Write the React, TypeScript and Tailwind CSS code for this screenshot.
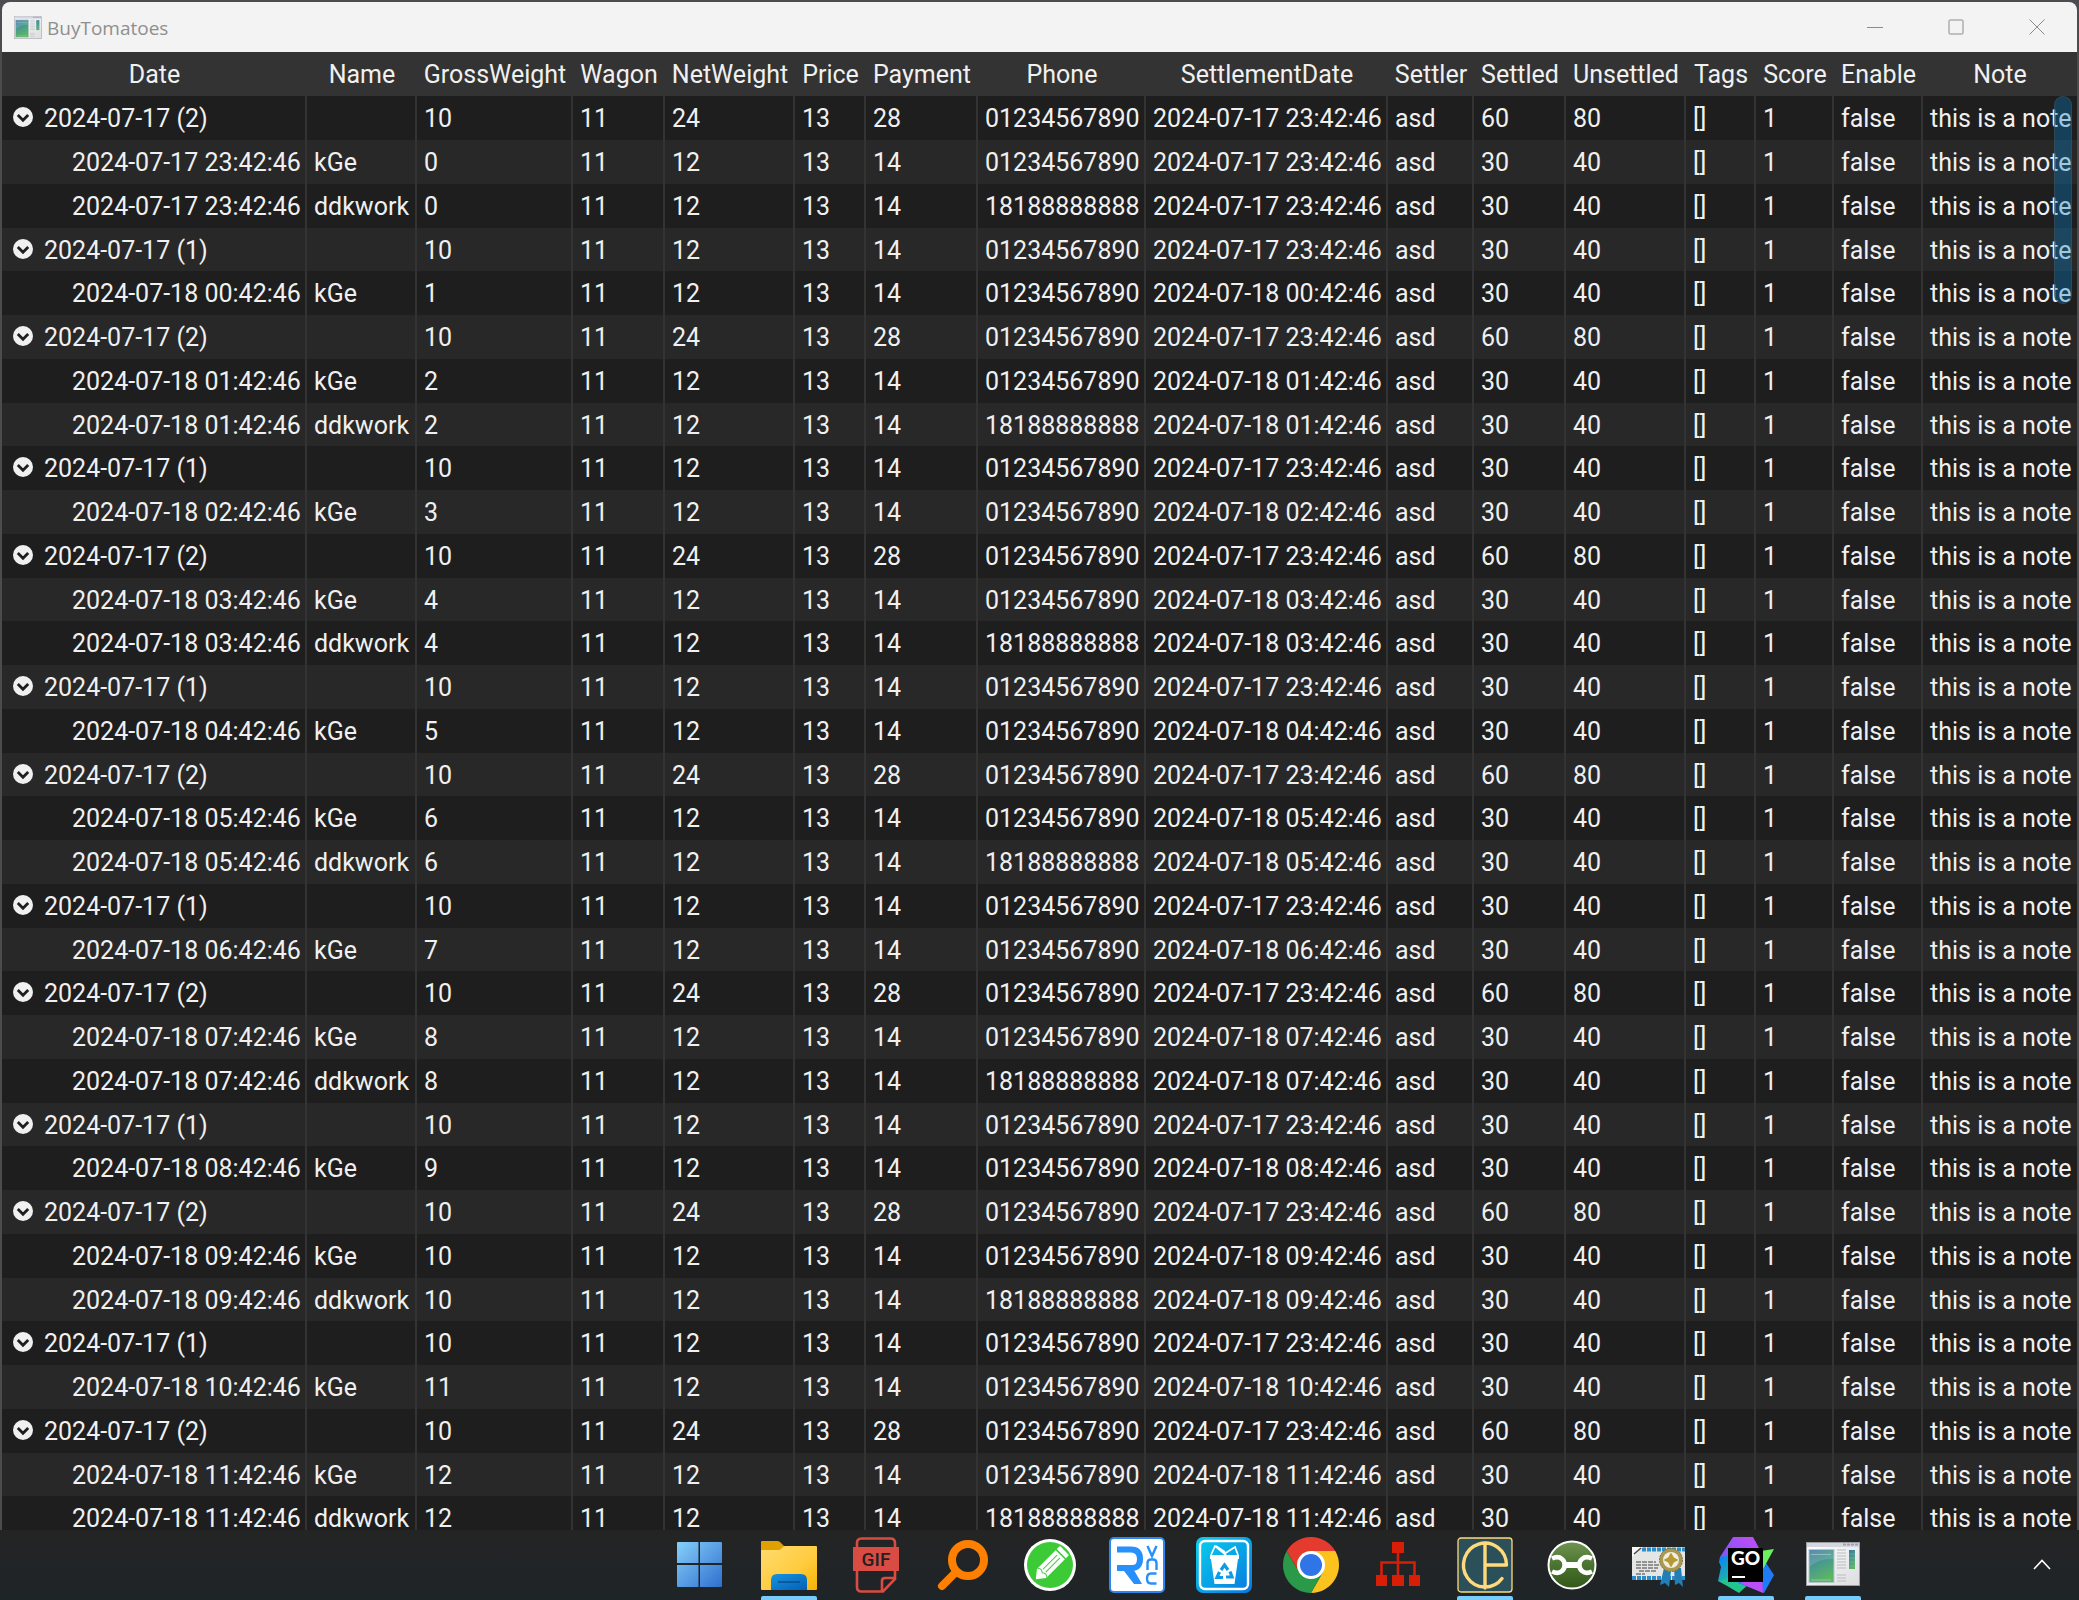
import React from "react";

type Column = { label: string; width: string };

const columns: Column[] = [
  { label: "Date", width: "w-[305px]" },
  { label: "Name", width: "w-[110px]" },
  { label: "GrossWeight", width: "w-[156px]" },
  { label: "Wagon", width: "w-[92px]" },
  { label: "NetWeight", width: "w-[130px]" },
  { label: "Price", width: "w-[71px]" },
  { label: "Payment", width: "w-[112px]" },
  { label: "Phone", width: "w-[168px]" },
  { label: "SettlementDate", width: "w-[242px]" },
  { label: "Settler", width: "w-[86px]" },
  { label: "Settled", width: "w-[92px]" },
  { label: "Unsettled", width: "w-[120px]" },
  { label: "Tags", width: "w-[70px]" },
  { label: "Score", width: "w-[78px]" },
  { label: "Enable", width: "w-[89px]" },
  { label: "Note", width: "w-auto" },
];

type Row = { group: boolean; cells: string[] };

const FIRST = "2024-07-17 23:42:46";

function buildRows(): Row[] {
  const rows: Row[] = [];
  for (let i = 0; i < 13; i++) {
    const pair = i % 2 === 0;
    const stamp = i === 0 ? FIRST : `2024-07-18 ${String(i - 1).padStart(2, "0")}:42:46`;
    const tail = ["[]", "1", "false", "this is a note"];
    rows.push({
      group: true,
      cells: [
        `2024-07-17 (${pair ? 2 : 1})`, "", "10", "11", pair ? "24" : "12", "13", pair ? "28" : "14",
        "01234567890", FIRST, "asd", pair ? "60" : "30", pair ? "80" : "40", ...tail,
      ],
    });
    const names = pair ? ["kGe", "ddkwork"] : ["kGe"];
    names.forEach((name) => {
      const phone = name === "kGe" ? "01234567890" : "18188888888";
      rows.push({
        group: false,
        cells: [stamp, name, String(i), "11", "12", "13", "14", phone, stamp, "asd", "30", "40", ...tail],
      });
    });
  }
  return rows;
}

const rows = buildRows();

function AppIcon({ className }: { className: string }) {
  return (
    <svg viewBox="0 0 54 44" preserveAspectRatio="none" className={className} aria-hidden="true">
      <defs>
        <linearGradient id="pane" x1="0" y1="0" x2="0.4" y2="1">
          <stop offset="0" stopColor="#3f74a6" />
          <stop offset="0.5" stopColor="#47998f" />
          <stop offset="1" stopColor="#5cb563" />
        </linearGradient>
        <linearGradient id="frame" x1="0" y1="0" x2="1" y2="1">
          <stop offset="0" stopColor="#ffffff" />
          <stop offset="1" stopColor="#dcdddf" />
        </linearGradient>
      </defs>
      <rect x="0.5" y="0.5" width="53" height="43" fill="url(#frame)" stroke="#9a9da1" />
      <rect x="1" y="1" width="52" height="4" fill="#d4d6e2" />
      <path d="M37 2.5h15" stroke="#9fa2ad" strokeWidth="2" strokeDasharray="3 1" />
      <rect x="3" y="7.5" width="25" height="33" fill="url(#pane)" stroke="#b5c7c9" />
      <path d="M3.5 25Q13 16 27.5 17V8H3.5Z" fill="#fff" opacity="0.14" />
      <path d="M5 12.5h20M5 38h20" stroke="#a8d0c0" strokeWidth="0.7" />
      <path d="M31 8h9M31 11h9M31 14h9M31 17h9M31 20h9M31 23h9M31 26h9M31 33h9M31 36h9M31 39h9" stroke="#b9bbbd" />
      <rect x="43" y="8" width="6" height="19" fill="url(#pane)" />
      <path d="M43 12h6M43 16h6M43 20h6M43 24h6" stroke="#7fb0b4" strokeWidth="0.6" />
    </svg>
  );
}

function ExpandIcon() {
  return (
    <svg viewBox="0 0 20 20" className="size-5" aria-hidden="true">
      <circle cx="10" cy="10" r="10" fill="#f0f0f0" />
      <path d="M4.8 8L10 13.2L15.2 8" fill="none" stroke="#1e1e1e" strokeWidth="2.8" />
    </svg>
  );
}

function TitleBar() {
  return (
    <header className="flex h-[50px] shrink-0 items-center rounded-t-lg bg-[#f3f3f3] pl-3">
      <AppIcon className="h-[23px] w-7" />
      <h1 className="ml-[5px] flex-1 pt-0.5 font-['Open_Sans',sans-serif] text-[19px] text-[#8f8f8f]">BuyTomatoes</h1>
      <div className="flex h-full text-[#8b8b8b]">
        <button aria-label="Minimize" className="grid w-[81px] place-items-center">
          <svg viewBox="0 0 16 16" className="size-4"><path d="M0 8.5h16" stroke="currentColor" /></svg>
        </button>
        <button aria-label="Maximize" className="grid w-[81px] place-items-center">
          <svg viewBox="0 0 16 16" className="size-4"><rect x="1" y="1" width="14" height="14" rx="1" fill="none" stroke="currentColor" /></svg>
        </button>
        <button aria-label="Close" className="grid w-[81px] place-items-center">
          <svg viewBox="0 0 16 16" className="size-4"><path d="M0.5 0.5l15 15M15.5 0.5l-15 15" stroke="currentColor" /></svg>
        </button>
      </div>
    </header>
  );
}

function RecordsTable() {
  return (
    <table className="w-full table-fixed border-separate border-spacing-0 text-[25px] leading-7 text-[#f0f0f0]">
      <colgroup>
        {columns.map((c) => <col key={c.label} className={c.width} />)}
      </colgroup>
      <thead>
        <tr className="h-11 bg-[#333333]">
          {columns.map((c) => (
            <th key={c.label} scope="col" className="p-0 pt-0.5 text-center font-normal whitespace-nowrap">{c.label}</th>
          ))}
        </tr>
      </thead>
      <tbody>
        {rows.map((row, r) => (
          <tr key={r} className="h-11 odd:bg-[#1e1e1e] even:bg-[#282828] nth-[4n]:h-[43px]">
            {row.cells.map((cell, c) => (
              <td key={c} className="border-r-2 border-[#333333] p-0 pt-0.5 pl-[7px] whitespace-nowrap last:border-r-0">
                {c > 0 ? cell : row.group ? (
                  <div className="flex items-center gap-[11px] pl-1">
                    <button aria-label="Collapse group" className="mb-1"><ExpandIcon /></button>
                    {cell}
                  </div>
                ) : (
                  <div className="pl-[63px]">{cell}</div>
                )}
              </td>
            ))}
          </tr>
        ))}
      </tbody>
    </table>
  );
}

function StartIcon() {
  return (
    <svg viewBox="2 0 56 56" className="size-14">
      <defs>
        <linearGradient id="win" gradientUnits="userSpaceOnUse" x1="5" y1="5" x2="50" y2="50">
          <stop offset="0" stopColor="#86d0fa" />
          <stop offset="1" stopColor="#2f6fcd" />
        </linearGradient>
      </defs>
      <path d="M6 5h20.500v21H5V6q0-1 1-1M28 5h21q1 0 1 1v20H28ZM5 28h21.500v22H6q-1 0-1-1ZM28 28h22v21q0 1-1 1H28Z" fill="url(#win)" />
    </svg>
  );
}

function FolderIcon() {
  return (
    <svg viewBox="0 0 56 56" className="size-14">
      <defs>
        <linearGradient id="fold" x1="0" y1="0" x2="1" y2="1">
          <stop offset="0" stopColor="#ffdc70" />
          <stop offset="0.6" stopColor="#ffcb3d" />
          <stop offset="1" stopColor="#f5b301" />
        </linearGradient>
        <linearGradient id="pocket" x1="0" y1="0" x2="1" y2="1">
          <stop offset="0" stopColor="#1693e0" />
          <stop offset="1" stopColor="#0560b4" />
        </linearGradient>
      </defs>
      <path d="M0 15V5q0-1 1-1h15q2 0 3 1l5 5-4 5Z" fill="#e0a000" />
      <path d="M0 14q0-1 1-1h16q2 0 3-1l2-2q1-1 2-1h31q1 0 1 1v42q0 1-1 1H1q-1 0-1-1Z" fill="url(#fold)" />
      <path d="M10 53V43q0-6 6-6h24q6 0 6 6v10Z" fill="url(#pocket)" />
      <path d="M17 45h22" stroke="#0a4a8c" strokeWidth="1.4" />
    </svg>
  );
}

function GifIcon() {
  return (
    <svg viewBox="-3 0 56 56" className="size-14">
      <g fill="none" stroke="#d94c43" strokeWidth="2.6">
        <path d="M6 12V6q0-4.500 4.500-4.500h29q4.500 0 4.500 4.500v6M6 32v18q0 4.500 4.500 4.500H32L44 42V32" />
        <path d="M31 54V44q0-3 3-3h10" />
      </g>
      <rect x="2" y="10" width="46" height="24" fill="#d94c43" />
      <text x="25" y="28.5" textAnchor="middle" fontFamily="Roboto, sans-serif" fontSize="19" fontWeight="500" fill="#24201f">GIF</text>
    </svg>
  );
}

function SearchIcon() {
  return (
    <svg viewBox="1 0 56 56" className="size-14">
      <g fill="none" stroke="#ff8000">
        <circle cx="34" cy="23" r="16" strokeWidth="8" />
        <path d="M22 35L8 49" strokeWidth="8" strokeLinecap="round" />
      </g>
    </svg>
  );
}

function PencilIcon() {
  return (
    <svg viewBox="0 0 56 56" className="size-14">
      <circle cx="28" cy="28" r="26" fill="#fff" />
      <circle cx="28" cy="28" r="23" fill="#3ccb37" />
      <g transform="rotate(45 28 28)">
        <path d="M21.5 8.5q0-1 1-1h11q1 0 1 1V12h-13Z" fill="#fff" />
        <path d="M21.5 13.5h13V40L28 48l-6.500-8Z" fill="#fff" />
        <path d="M26 16v20M30 16v20M21.5 39q3.200-3 6.500 0q3.200-3 6.500 0" fill="none" stroke="#3ccb37" strokeWidth="1" />
      </g>
    </svg>
  );
}

function RemoteIcon() {
  return (
    <svg viewBox="0 0 56 56" className="size-14">
      <rect x="1" y="1" width="54" height="54" rx="4" fill="#fff" stroke="#2d87f3" strokeWidth="2" />
      <g fill="none" stroke="#2790fb">
        <path d="M8 12.500h14q9 0 9 9.500t-9 9H8" strokeWidth="6" />
        <path d="M8 28h14l11 19h-8L15 34H8Z" fill="#2790fb" stroke="none" />
        <path d="M38.500 9l4.500 10 4.500-10M38.500 33v-7q0-3.500 3.500-3.500h2q3.500 0 3.500 3.500v7M47.500 36.500H42q-4 0-4 5t4 5h5.500" strokeWidth="2.400" />
      </g>
    </svg>
  );
}

function TrashIcon() {
  return (
    <svg viewBox="0 0 56 56" className="size-14">
      <defs>
        <linearGradient id="bin" x1="0" y1="0" x2="1" y2="1">
          <stop offset="0" stopColor="#0ad0ee" />
          <stop offset="1" stopColor="#0778df" />
        </linearGradient>
      </defs>
      <rect width="56" height="56" rx="7" fill="url(#bin)" />
      <rect x="4" y="4" width="48" height="48" rx="5" fill="none" stroke="#fff" strokeWidth="2.4" />
      <path d="M14 18h29v4H14ZM15 22h27l-3.500 25h-20Z" fill="#fff" />
      <path d="M15 18l4-9 11 9M28 17l11-7 3 8M20 9l9 6" fill="none" stroke="#fff" strokeWidth="1.7" />
      <g fill="none" stroke="#0b9be8" strokeWidth="3.2">
        <path d="M25 33l3.500-5 3.500 5" />
        <path d="M34 34.500l2 5.500h-6" />
        <path d="M27 40.500h-6l2.500-5.500" />
      </g>
    </svg>
  );
}

function ChromeIcon() {
  return (
    <svg viewBox="0 0 56 56" className="size-14">
      <path d="M28 28L3.750 14A28 28 0 0 1 52.250 14Z" fill="#e53a2e" />
      <path d="M28 14H52.250A28 28 0 0 1 28 56L40 35Z" fill="#fcc31e" />
      <path d="M3.750 14A28 28 0 0 0 28 56L40 35 28 28 16 35Z" fill="#2a9a48" />
      <path d="M3.750 14L16 35 28 14Z" fill="#e53a2e" />
      <circle cx="28" cy="28" r="14" fill="#fff" />
      <circle cx="28" cy="28" r="11" fill="#2f75e8" />
    </svg>
  );
}

function TreeIcon() {
  return (
    <svg viewBox="0 0 56 56" className="size-14">
      <path d="M22 5h12v11H22ZM6 38h11v11H6ZM22 38h12v11H22ZM39 38h11v11H39Z" fill="#d81e06" />
      <path d="M28 16v22M11.5 38V25.500h33V38" fill="none" stroke="#d81e06" strokeWidth="2.6" />
    </svg>
  );
}

function EmblemIcon() {
  return (
    <svg viewBox="0 0 56 56" className="size-14">
      <rect x="1" y="1" width="54" height="54" rx="3" fill="#2c505a" stroke="#ffd97a" strokeWidth="1.3" />
      <path d="M28 6V51M28 28H49.500A21.500 22 0 1 0 45 41.500" fill="none" stroke="#ffd97a" strokeWidth="3.4" strokeLinecap="round" strokeLinejoin="round" />
    </svg>
  );
}

function WrenchIcon() {
  return (
    <svg viewBox="0 0 56 56" className="size-14">
      <defs>
        <linearGradient id="wr" x1="0" y1="0" x2="0" y2="1">
          <stop offset="0" stopColor="#6f9450" />
          <stop offset="0.5" stopColor="#4a7430" />
          <stop offset="1" stopColor="#34571a" />
        </linearGradient>
      </defs>
      <circle cx="28" cy="28" r="23.5" fill="url(#wr)" stroke="#fff" strokeWidth="2" />
      <g fill="none" stroke="#fff" strokeWidth="4.6">
        <path d="M8 21.500Q14 18.500 18 22Q21 24.500 20.500 28Q21 31.500 18 34Q14 37.500 8 34.500" />
        <path d="M48 21.500Q42 18.500 38 22Q35 24.500 35.500 28Q35 31.500 38 34Q42 37.500 48 34.500" />
        <path d="M21 28h14" strokeWidth="6" />
      </g>
    </svg>
  );
}

function CertificateIcon() {
  return (
    <svg viewBox="0 0 56 56" className="size-14">
      <rect x="1" y="10" width="53" height="33" fill="#e4e5e5" />
      <path d="M11 12.500h43M1 41h53" stroke="#2b8cc9" strokeWidth="4" strokeDasharray="4 1" />
      <path d="M1 10h11l-11 10Z" fill="#f7f7f7" />
      <path d="M3 17l7-6" stroke="#444" strokeWidth="1.5" />
      <path d="M5 25h20M5 28h23M5 31h22M8 34h18M5 37h9" stroke="#777" strokeWidth="1.3" strokeDasharray="5 1" />
      <path d="M33 31l-4 17 5-2 4 4 2-16ZM43 31l1 17 4-2 4 4-2-19Z" fill="#237eb8" />
      <circle cx="40" cy="23" r="11.5" fill="#a99850" stroke="#827438" strokeDasharray="2 1" />
      <circle cx="40" cy="23" r="8" fill="#f0eee3" />
      <path d="M40 17.500l2 3.500 3.500 2-3.500 2-2 3.500-2-3.500-3.500-2 3.500-2Z" fill="#b59a32" stroke="#b59a32" strokeWidth="2" />
    </svg>
  );
}

function GolandIcon() {
  return (
    <svg viewBox="0 0 56 56" className="size-14">
      <defs>
        <linearGradient id="g1" x1="0" y1="1" x2="1" y2="0">
          <stop offset="0" stopColor="#6b57ff" />
          <stop offset="1" stopColor="#c64cf5" />
        </linearGradient>
        <linearGradient id="g2" x1="0" y1="0" x2="0.5" y2="1">
          <stop offset="0" stopColor="#0a7cff" />
          <stop offset="1" stopColor="#22c98a" />
        </linearGradient>
      </defs>
      <path d="M15 0h20l6 11-28 22L2 20Z" fill="url(#g1)" />
      <path d="M2 20l11-2 6 36-19-10 3-14-2-5Z" fill="url(#g2)" />
      <path d="M1 44l24-6 9 6-13 12Z" fill="#24c48e" />
      <path d="M44 20l12 18-10 18-26-10Z" fill="#1f7cf7" />
      <path d="M44 38l1 18-23-10Z" fill="#bd4df4" />
      <path d="M36 15l20-3-12 22Z" fill="#6df05e" />
      <rect x="10" y="11" width="35" height="34" fill="#000" />
      <text x="27.5" y="27.5" textAnchor="middle" fontFamily="Lato, sans-serif" fontSize="19" fontWeight="900" fill="#fff">GO</text>
      <rect x="14" y="39" width="13" height="2" fill="#fff" />
    </svg>
  );
}

const apps: { name: string; icon: React.ReactNode; open?: boolean }[] = [
  { name: "Start", icon: <StartIcon /> },
  { name: "File Explorer", icon: <FolderIcon />, open: true },
  { name: "GIF recorder", icon: <GifIcon /> },
  { name: "Search", icon: <SearchIcon /> },
  { name: "Editor", icon: <PencilIcon /> },
  { name: "VNC Viewer", icon: <RemoteIcon /> },
  { name: "Uninstaller", icon: <TrashIcon /> },
  { name: "Chrome", icon: <ChromeIcon /> },
  { name: "Network map", icon: <TreeIcon /> },
  { name: "Emblem", icon: <EmblemIcon />, open: true },
  { name: "Tools", icon: <WrenchIcon /> },
  { name: "Certificates", icon: <CertificateIcon /> },
  { name: "GoLand", icon: <GolandIcon />, open: true },
  { name: "BuyTomatoes", icon: <AppIcon className="mt-[5px] mb-[7px] h-11 w-[54px]" />, open: true },
];

function Taskbar() {
  return (
    <footer className="flex h-[70px] shrink-0 items-stretch justify-end bg-linear-to-b from-[#242424] to-[#1f2428] pr-7">
      <nav aria-label="Taskbar" className="mr-[172px] flex gap-[31px] pt-[7px]">
        {apps.map((app) => (
          <button key={app.name} aria-label={app.name} className="flex w-14 flex-col items-center justify-between">
            {app.icon}
            {app.open && <span className="h-1 w-14 rounded-t-xs bg-[#76cdfd]" />}
          </button>
        ))}
      </nav>
      <button aria-label="Show hidden icons">
        <svg viewBox="0 0 18 18" className="size-[18px]"><path d="M1 13L9 4.500L17 13" fill="none" stroke="#fff" strokeWidth="1.6" /></svg>
      </button>
    </footer>
  );
}

export default function App() {
  return (
    <div className="flex h-screen flex-col overflow-hidden bg-[#4a4c50] font-[Roboto,sans-serif]">
      <main className="flex min-h-0 flex-1 flex-col px-0.5 pt-0.5">
        <TitleBar />
        <div className="relative min-h-0 flex-1 overflow-hidden bg-[#1e1e1e]">
          <RecordsTable />
          <div className="absolute top-11 right-[5px] h-52 w-[18px] rounded-full border border-[#3f5058]/60 bg-[#0a7fc8]/35" />
        </div>
      </main>
      <Taskbar />
    </div>
  );
}
